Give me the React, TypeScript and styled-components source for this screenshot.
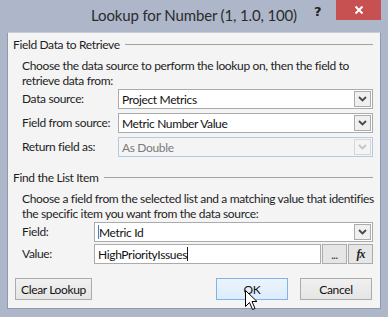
import React from "react";
import styled, { createGlobalStyle } from "styled-components";

const Global = createGlobalStyle`
  html, body { margin: 0; padding: 0; }
  body {
    width: 388px;
    height: 317px;
    overflow: hidden;
    font-family: Lato, "Noto Sans", sans-serif;
  }
`;

const Window = styled.div`
  width: 388px;
  height: 317px;
  background: #aeb7ca;
  display: flex;
  flex-direction: column;
  box-sizing: border-box;
  position: relative;
  overflow: hidden;
`;

const TitleBar = styled.div`
  height: 32px;
  flex: none;
  display: flex;
  align-items: flex-start;
`;

const Title = styled.div`
  flex: 1;
  text-align: center;
  font-size: 15px;
  line-height: 30px;
  letter-spacing: -0.15px;
  color: #2b2b2b;
  padding-left: 74px;
  white-space: nowrap;
`;

const HelpGlyph = styled.div`
  width: 14px;
  font-family: "DejaVu Sans", sans-serif;
  font-weight: bold;
  font-size: 13px;
  line-height: 24px;
  color: #222;
  margin-right: 8px;
`;

const CloseButton = styled.div`
  width: 45px;
  height: 20px;
  background: #c75050;
  margin-right: 7px;
  display: flex;
  align-items: center;
  justify-content: center;
`;

const Panel = styled.div`
  margin: 0 7px;
  height: 277px;
  flex: none;
  box-sizing: border-box;
  background: #f4f4f4;
  border: 1px solid #8f9ab0;
  border-top-color: #c8cdd8;
  padding: 4px 7px 0 5px;
  font-size: 12px;
  letter-spacing: -0.35px;
  color: #1e1e1e;
  display: flex;
  flex-direction: column;
  white-space: nowrap;
`;

const SectionHead = styled.div`
  display: flex;
  align-items: center;
  gap: 5px;
  height: 16px;
  line-height: 16px;
  &::after {
    content: "";
    flex: 1;
    height: 1px;
    background: #a3a3a3;
    margin-top: -1px;
  }
`;

const Section = styled.div<{ $top?: number }>`
  padding-left: 9px;
  margin-top: ${(p) => p.$top ?? 5}px;
`;

const Para = styled.div`
  line-height: 15px;
`;

const Rows = styled.div<{ $label: number; $gap: number }>`
  display: grid;
  grid-template-columns: ${(p) => p.$label}px 1fr;
  row-gap: ${(p) => p.$gap}px;
  margin-top: 1px;
  align-items: center;
`;

const Label = styled.div`
  line-height: 20px;
`;

const Select = styled.div<{ $disabled?: boolean }>`
  height: 20px;
  box-sizing: border-box;
  border: 1px solid ${(p) => (p.$disabled ? "#b4cae3" : "#ababab")};
  background: ${(p) => (p.$disabled ? "#f4f4f4" : "#fff")};
  color: ${(p) => (p.$disabled ? "#7a7a7a" : "#111")};
  display: flex;
  align-items: center;
  padding-left: 3px;
`;

const SelectText = styled.div`
  flex: 1;
  display: flex;
  align-items: center;
`;

const DropButton = styled.div<{ $disabled?: boolean }>`
  width: 17px;
  height: 16px;
  box-sizing: border-box;
  margin-right: 1px;
  border: 1px solid ${(p) => (p.$disabled ? "#d6d6d6" : "#acacac")};
  background: ${(p) => (p.$disabled ? "#f4f4f4" : "#f0f0f0")};
  display: flex;
  align-items: center;
  justify-content: center;
`;

const Caret = styled.span<{ $blue?: boolean }>`
  display: inline-block;
  width: 1px;
  height: 14px;
  background: ${(p) => (p.$blue ? "#3b7fd4" : "#1a1a1a")};
`;

const ValueLine = styled.div`
  display: flex;
  gap: 1px;
  align-items: center;
`;

const TextInput = styled(Select)`
  flex: 1;
`;

const SmallButton = styled.div`
  width: 25px;
  height: 20px;
  box-sizing: border-box;
  border: 1px solid #acacac;
  background: #e6e6e6;
  display: flex;
  align-items: center;
  justify-content: center;
  font-size: 11px;
  color: #222;
`;

const Fx = styled.span`
  font-family: "Liberation Serif", serif;
  font-style: italic;
  font-weight: bold;
  font-size: 12px;
  letter-spacing: -1px;
`;

const ButtonRow = styled.div`
  display: flex;
  align-items: center;
  margin-top: 14px;
  padding: 0 1px 0 2px;
  gap: 12px;
`;

const Button = styled.div<{ $w: number; $hot?: boolean }>`
  width: ${(p) => p.$w}px;
  height: 22px;
  box-sizing: border-box;
  border: 1px solid ${(p) => (p.$hot ? "#7eb4ea" : "#acacac")};
  background: ${(p) =>
    p.$hot
      ? "linear-gradient(#ecf4fc, #dcecfc)"
      : "linear-gradient(#f0f0f0, #e5e5e5)"};
  display: flex;
  align-items: center;
  justify-content: center;
  color: #111;
`;

const Spacer = styled.div`
  flex: 1;
`;

const Cursor = styled.svg`
  position: absolute;
  left: 245px;
  top: 290px;
`;

const Chevron = ({ light }: { light?: boolean }) => (
  <svg width="9" height="6" viewBox="0 0 9 6">
    <polyline
      points="1,1 4.5,4.5 8,1"
      fill="none"
      stroke={light ? "#c4c4c4" : "#4a4a4a"}
      strokeWidth="1.8"
    />
  </svg>
);

const Combo = ({ value, disabled, caretFirst }: { value: string; disabled?: boolean; caretFirst?: boolean }) => (
  <Select $disabled={disabled}>
    <SelectText>
      {caretFirst && <Caret $blue />}
      {value}
    </SelectText>
    <DropButton $disabled={disabled}>
      <Chevron light={disabled} />
    </DropButton>
  </Select>
);

export default function App() {
  return (
    <>
      <Global />
      <Window>
        <TitleBar>
          <Title>Lookup for Number (1, 1.0, 100)</Title>
          <HelpGlyph>?</HelpGlyph>
          <CloseButton>
            <svg width="10" height="10" viewBox="0 0 10 10">
              <path d="M1.5 1.5 L8.5 8.5 M8.5 1.5 L1.5 8.5" stroke="#fff" strokeWidth="2" />
            </svg>
          </CloseButton>
        </TitleBar>
        <Panel>
          <SectionHead>Field Data to Retrieve</SectionHead>
          <Section>
            <Para>
              Choose the data source to perform the lookup on, then the field to
              <br />
              retrieve data from:
            </Para>
            <Rows $label={96} $gap={4}>
              <Label>Data source:</Label>
              <Combo value="Project Metrics" />
              <Label>Field from source:</Label>
              <Combo value="Metric Number Value" />
              <Label>Return field as:</Label>
              <Combo value="As Double" disabled />
            </Rows>
          </Section>
          <Section $top={13}>
            <SectionHead style={{ marginLeft: -9 }}>Find the List Item</SectionHead>
          </Section>
          <Section>
            <Para>
              Choose a field from the selected list and a matching value that identifies
              <br />
              the specific item you want from the data source:
            </Para>
            <Rows $label={72} $gap={2}>
              <Label>Field:</Label>
              <Combo value="Metric Id" caretFirst />
              <Label>Value:</Label>
              <ValueLine>
                <TextInput>
                  HighPriorityIssues
                  <Caret />
                </TextInput>
                <SmallButton>...</SmallButton>
                <SmallButton>
                  <Fx>fx</Fx>
                </SmallButton>
              </ValueLine>
            </Rows>
          </Section>
          <ButtonRow>
            <Button $w={77}>Clear Lookup</Button>
            <Spacer />
            <Button $w={72} $hot>
              OK
            </Button>
            <Button $w={72}>Cancel</Button>
          </ButtonRow>
        </Panel>
        <Cursor width="13" height="21" viewBox="0 0 13 21">
          <path
            d="M0.5 0.5 L0.5 16.5 L4.5 12.5 L7.5 19.5 L10 18.5 L7 11.5 L12 11.5 Z"
            fill="#fff"
            stroke="#000"
            strokeWidth="1"
          />
        </Cursor>
      </Window>
    </>
  );
}
